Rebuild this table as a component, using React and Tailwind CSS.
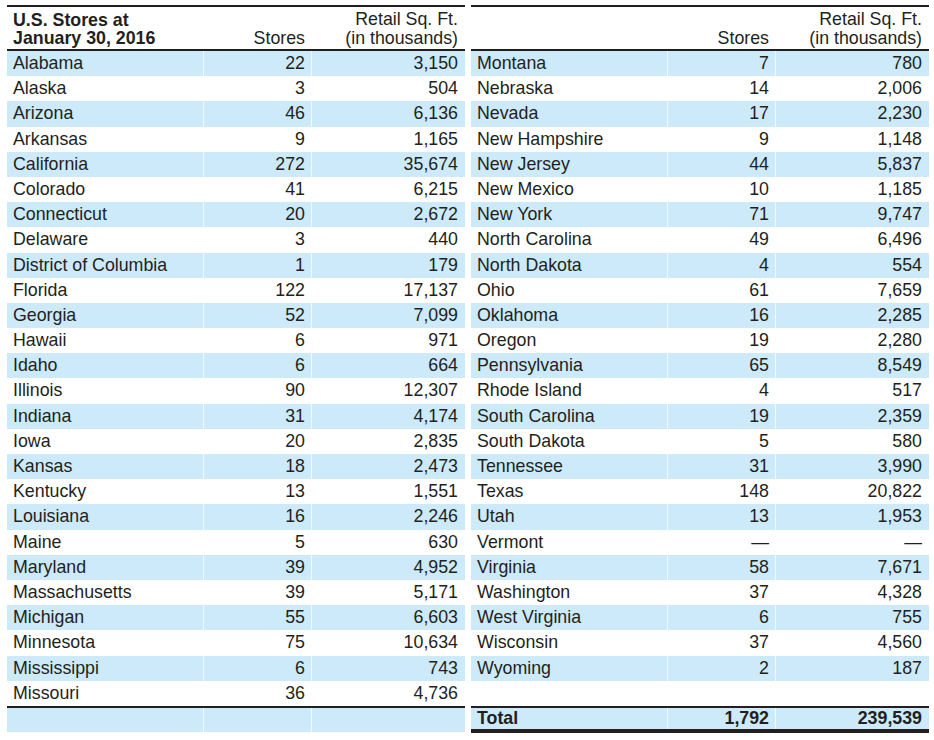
const left = [
  ["Alabama", "22", "3,150"],
  ["Alaska", "3", "504"],
  ["Arizona", "46", "6,136"],
  ["Arkansas", "9", "1,165"],
  ["California", "272", "35,674"],
  ["Colorado", "41", "6,215"],
  ["Connecticut", "20", "2,672"],
  ["Delaware", "3", "440"],
  ["District of Columbia", "1", "179"],
  ["Florida", "122", "17,137"],
  ["Georgia", "52", "7,099"],
  ["Hawaii", "6", "971"],
  ["Idaho", "6", "664"],
  ["Illinois", "90", "12,307"],
  ["Indiana", "31", "4,174"],
  ["Iowa", "20", "2,835"],
  ["Kansas", "18", "2,473"],
  ["Kentucky", "13", "1,551"],
  ["Louisiana", "16", "2,246"],
  ["Maine", "5", "630"],
  ["Maryland", "39", "4,952"],
  ["Massachusetts", "39", "5,171"],
  ["Michigan", "55", "6,603"],
  ["Minnesota", "75", "10,634"],
  ["Mississippi", "6", "743"],
  ["Missouri", "36", "4,736"],
];

const right = [
  ["Montana", "7", "780"],
  ["Nebraska", "14", "2,006"],
  ["Nevada", "17", "2,230"],
  ["New Hampshire", "9", "1,148"],
  ["New Jersey", "44", "5,837"],
  ["New Mexico", "10", "1,185"],
  ["New York", "71", "9,747"],
  ["North Carolina", "49", "6,496"],
  ["North Dakota", "4", "554"],
  ["Ohio", "61", "7,659"],
  ["Oklahoma", "16", "2,285"],
  ["Oregon", "19", "2,280"],
  ["Pennsylvania", "65", "8,549"],
  ["Rhode Island", "4", "517"],
  ["South Carolina", "19", "2,359"],
  ["South Dakota", "5", "580"],
  ["Tennessee", "31", "3,990"],
  ["Texas", "148", "20,822"],
  ["Utah", "13", "1,953"],
  ["Vermont", "—", "—"],
  ["Virginia", "58", "7,671"],
  ["Washington", "37", "4,328"],
  ["West Virginia", "6", "755"],
  ["Wisconsin", "37", "4,560"],
  ["Wyoming", "2", "187"],
];

function Row({ cells, blue, bold, extra = "" }) {
  return (
    <div
      className={`grid grid-cols-[196px_108px_154px] h-[25.2px] leading-[25.2px] ${
        blue ? "bg-[#cceaf9]" : "bg-white"
      } ${bold ? "font-bold" : ""} ${extra}`}
    >
      <div className="pl-[6px] whitespace-nowrap">{cells[0]}</div>
      <div className="pr-[6px] text-right border-l border-white/70">{cells[1]}</div>
      <div className="pr-[7px] text-right border-l border-white/70">{cells[2]}</div>
    </div>
  );
}

function Header({ title }) {
  return (
    <div className="grid grid-cols-[196px_108px_154px] h-[46px] border-t-2 border-b-2 border-[#231f20]">
      <div className="pl-[6px] flex flex-col justify-end pb-[2px] font-bold leading-[18px]">
        {title ? (
          <>
            <span>U.S. Stores at</span>
            <span>January 30, 2016</span>
          </>
        ) : null}
      </div>
      <div className="pr-[6px] flex flex-col justify-end items-end pb-[2px] leading-[18px]">
        <span>Stores</span>
      </div>
      <div className="pr-[7px] flex flex-col justify-end items-end pb-[1px] leading-[19px]">
        <span>Retail Sq. Ft.</span>
        <span>(in thousands)</span>
      </div>
    </div>
  );
}

export default function App() {
  return (
    <div className="w-[934px] h-[740px] bg-white pt-[5px] pl-[7px] flex gap-[6px] font-['Liberation_Sans',Arial,sans-serif] text-[17.8px] text-[#231f20]">
      <div className="w-[458px] flex flex-col">
        <Header title />
        {left.map((r, i) => (
          <Row key={r[0]} cells={r} blue={i % 2 === 0} />
        ))}
        <div className="grid grid-cols-[196px_108px_154px] h-[26px] border-t-2 border-[#231f20] bg-[#cceaf9]">
          <div></div>
          <div className="border-l border-white/70"></div>
          <div className="border-l border-white/70"></div>
        </div>
      </div>
      <div className="w-[458px] flex flex-col">
        <Header />
        {right.map((r, i) => (
          <Row key={r[0]} cells={r} blue={i % 2 === 0} />
        ))}
        <Row cells={["", "", ""]} blue={false} />
        <div className="grid grid-cols-[196px_108px_154px] h-[27px] leading-[21px] border-t-2 border-b-4 border-[#231f20] bg-[#cceaf9] font-bold">
          <div className="pl-[6px]">Total</div>
          <div className="pr-[6px] text-right border-l border-white/70">1,792</div>
          <div className="pr-[7px] text-right border-l border-white/70">239,539</div>
        </div>
      </div>
    </div>
  );
}
